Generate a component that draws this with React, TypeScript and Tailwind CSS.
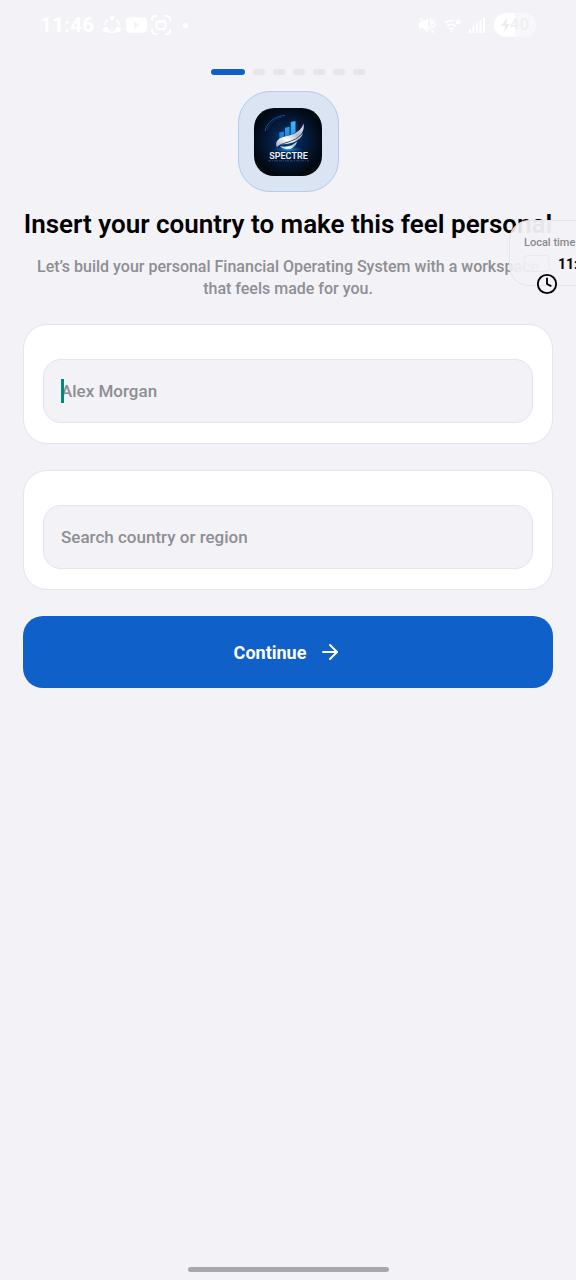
import React, { useState } from "react";
import { ArrowRight, Clock } from "lucide-react";

const STEPS = 7;

function StatusBar() {
  return (
    <div className="flex h-[50px] items-center justify-between px-10 text-white">
      <div className="flex items-center gap-2">
        <span className="text-[21px] font-bold leading-6">11:46</span>
        <svg width="20" height="20" viewBox="0 0 20 20" fill="none">
          <path
            d="M6 4.5A7 7 0 0 0 3 10M14 4.5A7 7 0 0 1 17 10M6.5 16.5a7 7 0 0 0 7 0"
            stroke="currentColor"
            strokeWidth="1.6"
          />
          <circle cx="10" cy="3" r="2.4" fill="currentColor" />
          <circle cx="3.8" cy="14.5" r="2.8" fill="currentColor" />
          <circle cx="16.2" cy="14.5" r="2.8" fill="currentColor" />
        </svg>
        <svg width="21" height="16" viewBox="0 0 22 16" className="-ml-1">
          <rect width="22" height="16" rx="4" fill="currentColor" />
          <path d="M8.5 4.5v7l6-3.5z" fill="#f2f2f7" />
        </svg>
        <svg
          width="20"
          height="20"
          viewBox="0 0 20 20"
          fill="none"
          stroke="currentColor"
          strokeWidth="1.8"
          className="-ml-1"
        >
          <path d="M1 6V4a3 3 0 0 1 3-3h2M14 1h2a3 3 0 0 1 3 3v2M19 14v2a3 3 0 0 1-3 3h-2M6 19H4a3 3 0 0 1-3-3v-2" />
          <rect x="5.5" y="6" width="9" height="8" rx="1.5" />
          <path d="M6 7h8" />
        </svg>
        <span className="ml-1 size-[5px] rounded-full bg-white"></span>
      </div>

      <div className="flex items-center gap-2">
        <svg width="17" height="17" viewBox="0 0 17 17" fill="none">
          <path d="M0 5.5h3.5L9 1v14.5L3.5 11H0z" fill="currentColor" />
          <path
            d="M1 1l14 15M12 1l-1 3 2 2-1 3 2 2M15 2l-1 3 2 2-1 3"
            stroke="currentColor"
            strokeWidth="1.4"
          />
        </svg>
        <svg
          width="17"
          height="15"
          viewBox="0 0 18 15"
          fill="none"
          stroke="currentColor"
          strokeWidth="1.8"
        >
          <path d="M1 5a10 10 0 0 1 10-2.5M3 8.5a7 7 0 0 1 10 0M5.5 11.5a3.5 3.5 0 0 1 5 0" />
          <circle cx="8" cy="13.5" r="1" fill="currentColor" stroke="none" />
          <circle cx="15" cy="3.5" r="1.8" />
        </svg>
        <svg width="17" height="16" viewBox="0 0 17 16" fill="currentColor">
          <rect x="0" y="12" width="2" height="4" />
          <rect x="3.5" y="9" width="2" height="7" />
          <rect x="7" y="6" width="2" height="10" />
          <rect x="10.5" y="3" width="2" height="13" />
          <rect x="14" y="0" width="2" height="16" />
        </svg>
        <span className="flex h-6 w-[42px] items-center justify-center rounded-full bg-linear-to-r from-white from-50% to-[#f8f8fb] to-50% text-[17px] font-bold text-[#f0f0f4]">
          <svg width="9" height="14" viewBox="0 0 9 14" fill="#ececf0">
            <path d="M6 0L0 8h4l-1 6 6-8H5z" />
          </svg>
          40
        </span>
      </div>
    </div>
  );
}

function SpectreLogo() {
  return (
    <svg width="68" height="68" viewBox="0 0 68 68" role="img" aria-label="Spectre">
      <defs>
        <radialGradient id="glow" cx="0.5" cy="0.48" r="0.52">
          <stop offset="0" stopColor="#063f80" />
          <stop offset="0.45" stopColor="#041f45" />
          <stop offset="1" stopColor="#020810" />
        </radialGradient>
        <radialGradient id="flare">
          <stop offset="0" stopColor="#1c9cf0" />
          <stop offset="1" stopColor="#0a4f9c" stopOpacity="0" />
        </radialGradient>
        <linearGradient id="bar" x1="1" y1="0" x2="0" y2="1">
          <stop offset="0" stopColor="#35c4ff" />
          <stop offset="1" stopColor="#0a78d4" />
        </linearGradient>
        <linearGradient id="silver" x1="0" y1="1" x2="1" y2="0">
          <stop offset="0" stopColor="#a0a9b6" />
          <stop offset="0.35" stopColor="#ffffff" />
          <stop offset="0.65" stopColor="#b3bac6" />
          <stop offset="1" stopColor="#e9edf3" />
        </linearGradient>
      </defs>
      <rect width="68" height="68" rx="20" fill="url(#glow)" />
      <path d="M11 23C13 14 21 8 31 7.5" fill="none" stroke="#1259a8" strokeWidth="0.9" />
      <path d="M13 22C16 15 21 11 28 9" fill="none" stroke="#0d3f80" strokeWidth="0.7" />
      <ellipse cx="34" cy="41.5" rx="16" ry="3.5" fill="url(#flare)" />
      <path
        d="M25.3 24.5l4.5-1v5.5l-4.5 2zM31 19.8l4.5-1V27L31 29zM36.7 14l4.8-1v11l-4.8 3z"
        fill="url(#bar)"
      />
      <path
        d="M49.5 15.5C48 20.500 44.500 23.500 39 26C33 28.800 25 28.500 22.500 34C21.800 36 22.200 38 23 39.200C25.500 35.500 32 35 38.500 32C46 28.500 51 24 49.500 15.500z"
        fill="url(#silver)"
      />
      <path
        d="M49 25C45 30.500 37 34.500 25.500 36.500C36 36.500 46.500 33.500 49 25z"
        fill="url(#silver)"
      />
      <path
        d="M26 38C31 39.500 38 38.500 43 33.500C41 42 30.500 43.500 26 38z"
        fill="url(#silver)"
      />
      <text
        x="34.5"
        y="50.5"
        textAnchor="middle"
        fontFamily="Roboto, sans-serif"
        fontSize="9"
        fontWeight="600"
        fill="#eef2f8"
      >
        SPECTRE
      </text>
      <path d="M14 52.8h41" stroke="#24486c" strokeWidth="1" strokeDasharray="3 1 1 1 4 1" />
    </svg>
  );
}

function LocalTimeCard() {
  return (
    <aside className="absolute left-[509px] top-[220px] h-[66px] w-36 rounded-[20px] border border-[#e4e4ea] bg-linear-to-r from-[#f2f2f7]/85 to-[#f2f2f7]/95 to-10% px-3.5 pt-3.5">
      <p className="text-[11px] font-medium leading-4 text-[#8a8a8f]">Local time</p>
      <div className="mt-1 flex items-center gap-2">
        <span className="h-[17px] w-[26px] rounded-sm border border-[#e9e9ee]"></span>
        <span className="text-[14px] font-bold leading-4 text-black">11:46</span>
      </div>
      <Clock className="absolute left-[26px] top-[52px] size-[22px] text-black" />
    </aside>
  );
}

interface FieldProps {
  id: string;
  label: string;
  placeholder: string;
  value: string;
  onChange: (value: string) => void;
  caret?: boolean;
}

function Field({ id, label, placeholder, value, onChange, caret }: FieldProps) {
  return (
    <div className="rounded-3xl border border-[#e5e5ea] bg-white px-[19px] pb-5 pt-[34px]">
      <div className="relative">
        <input
          id={id}
          type="text"
          aria-label={label}
          value={value}
          placeholder={placeholder}
          onChange={(e) => onChange(e.target.value)}
          className="block h-16 w-full rounded-[18px] border border-[#e5e5ea] bg-[#f2f2f7] px-[17px] text-[17px] font-medium text-black outline-none placeholder:text-[#8e8e93]"
        />
        {caret && (
          <span className="absolute left-[18px] top-5 h-6 w-[3px] bg-[#00897b]"></span>
        )}
      </div>
    </div>
  );
}

export default function App() {
  const [name, setName] = useState("");
  const [country, setCountry] = useState("");

  return (
    <div className="relative flex min-h-screen flex-col overflow-hidden bg-[#f2f2f7] font-[Roboto,sans-serif]">
      <StatusBar />

      <main className="flex flex-1 flex-col px-[23px] pt-[19px]">
        <div className="flex justify-center gap-2">
          {Array.from({ length: STEPS }, (_, i) => (
            <span
              key={i}
              className={
                i === 0
                  ? "h-1.5 w-[34px] rounded-full bg-[#1060c9]"
                  : "h-1.5 w-3 rounded-full bg-[#e5e5ea]"
              }
            ></span>
          ))}
        </div>

        <div className="mt-4 flex size-[101px] items-center justify-center self-center rounded-[32px] border border-[#b4caec] bg-[#dbe4f3]">
          <SpectreLogo />
        </div>

        <h1 className="mt-4 whitespace-nowrap text-center text-[26px] font-semibold leading-8 text-black">
          Insert your country to make this feel personal
        </h1>
        <p className="mt-4 text-center text-[16px] font-medium leading-[22px] text-[#8e8e93]">
          Let’s build your personal Financial Operating System with a workspace that feels made for
          you.
        </p>

        <form className="mt-6 flex flex-col gap-[26px]" onSubmit={(e) => e.preventDefault()}>
          <Field
            id="name"
            label="Name"
            placeholder="Alex Morgan"
            value={name}
            onChange={setName}
            caret={name === ""}
          />
          <Field
            id="country"
            label="Country"
            placeholder="Search country or region"
            value={country}
            onChange={setCountry}
          />
          <button
            type="submit"
            className="flex h-[72px] items-center justify-center gap-3 rounded-[20px] bg-[#1060c9] text-[18px] font-bold text-white"
          >
            Continue
            <ArrowRight className="size-6" />
          </button>
        </form>
      </main>

      <div className="mb-2 h-[5px] w-[201px] self-center rounded-full bg-[#a8a8ab]"></div>

      <LocalTimeCard />
    </div>
  );
}
